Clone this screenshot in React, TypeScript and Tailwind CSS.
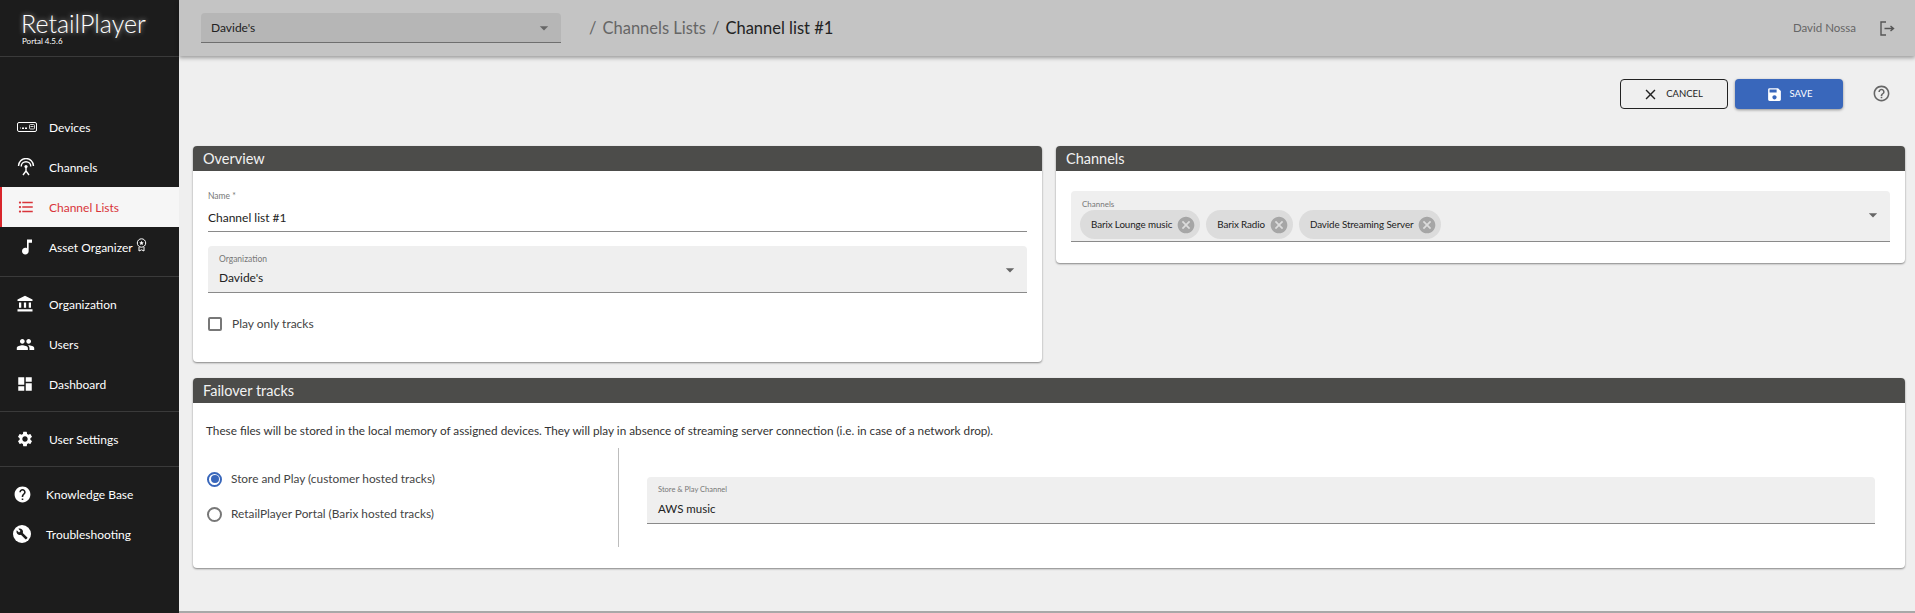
import { ReactNode } from "react";
import {
  MdAccountBalance, MdArrowDropDown, MdBuild, MdCancel, MdClose, MdDashboard, MdFormatListBulleted,
  MdHelp, MdHelpOutline, MdMusicNote, MdPeople, MdSave, MdSettings,
} from "react-icons/md";

const FONT = "font-['Lato','Noto_Sans',sans-serif]";

function DeviceIcon() {
  return (
    <svg width="20" height="10" viewBox="0 0 20 10" fill="none">
      <rect x="0.5" y="0.5" width="19" height="9" rx="1.5" stroke="#fff" />
      <rect x="5" y="5.5" width="2" height="1.5" fill="#fff" />
      <rect x="8" y="5.5" width="2" height="1.5" fill="#fff" />
      <rect x="12.5" y="2.5" width="5" height="4.5" rx="1" stroke="#fff" strokeWidth="0.8" />
      <path d="M3 6h1M13.5 4.5h3" stroke="#fff" strokeWidth="0.8" />
    </svg>
  );
}

function AntennaIcon() {
  return (
    <svg width="18" height="18" viewBox="0 0 18 18" fill="none" stroke="#fff" strokeWidth="1.4">
      <path d="M1.5 8a7.5 7.5 0 0 1 15 0" />
      <path d="M4.2 8.5a4.8 4.8 0 0 1 9.6 0" />
      <circle cx="9" cy="8.5" r="1.6" fill="#fff" stroke="none" />
      <path d="M9 9v4M9 13l-3 4M9 13l3 4" />
    </svg>
  );
}

function AwardIcon() {
  return (
    <svg width="11" height="14" viewBox="0 0 11 14" fill="none" stroke="#fff" strokeWidth="1">
      <circle cx="5.5" cy="5" r="4.2" />
      <path d="M5.5 2.8l.7 1.4 1.5.2-1.1 1 .3 1.5-1.4-.7-1.4.7.3-1.5-1.1-1 1.5-.2z" fill="#fff" stroke="none" />
      <path d="M3 9v4l2.5-1.2L8 13V9" />
    </svg>
  );
}

function LogoutIcon() {
  return (
    <svg width="15" height="15" viewBox="0 0 15 15" fill="none" stroke="#555" strokeWidth="1.4">
      <path d="M6 1H1v13h5" />
      <path d="M4.5 7.5h9M10.5 5l3 2.5-3 2.5" />
    </svg>
  );
}

function NavRow({ icon, label, active, extra, tight }: { icon: ReactNode; label: string; active?: boolean; extra?: ReactNode; tight?: boolean }) {
  return (
    <div className={`flex h-10 items-center text-[12px] ${active ? "border-l-2 border-[#d9262c] bg-[#f6f6f6] text-[#d9343a]" : "text-white"} ${tight ? "pl-[13px]" : active ? "pl-[15px]" : "pl-[17px]"}`}>
      <span className={`flex shrink-0 items-center justify-start ${tight ? "w-[33px]" : "w-[32px]"}`}>{icon}</span>
      <span className="pt-[1px]">{label}</span>
      {extra}
    </div>
  );
}

function Sidebar() {
  return (
    <aside className="flex h-[613px] w-[179px] shrink-0 flex-col bg-[#1c1c1c]">
      <div className="h-[57px] border-b border-[#3a3a3a] pl-[21px] pt-[9px] text-white">
        <div className="text-[25px] leading-[28px] font-light [text-shadow:0_0_5px_rgba(255,255,255,0.7)]">RetailPlayer</div>
        <div className="pl-[1px] text-[8px] leading-[9px]">Portal 4.5.6</div>
      </div>
      <nav className="pt-[50px]">
        <NavRow icon={<DeviceIcon />} label="Devices" />
        <NavRow icon={<AntennaIcon />} label="Channels" />
        <NavRow active icon={<MdFormatListBulleted size={18} color="#d9343a" />} label="Channel Lists" />
        <NavRow icon={<MdMusicNote size={20} color="#fff" />} label="Asset Organizer" extra={<span className="mb-[5px] ml-[3px]"><AwardIcon /></span>} />
      </nav>
      <div className="mt-[9px] border-t border-[#3a3a3a] pt-[7px]">
        <NavRow icon={<MdAccountBalance size={18} color="#fff" className="-ml-px" />} label="Organization" />
        <NavRow icon={<MdPeople size={19} color="#fff" className="-ml-px" />} label="Users" />
        <NavRow icon={<MdDashboard size={18} color="#fff" className="-ml-px" />} label="Dashboard" />
      </div>
      <div className="mt-[7px] border-t border-[#3a3a3a] py-[7px]">
        <NavRow icon={<MdSettings size={18} color="#fff" className="-ml-px" />} label="User Settings" />
      </div>
      <div className="border-t border-[#3a3a3a] pt-[7px]">
        <NavRow tight icon={<MdHelp size={19} color="#fff" />} label="Knowledge Base" />
        <NavRow tight icon={<span className="flex h-[18px] w-[18px] items-center justify-center rounded-full bg-white"><MdBuild size={12} color="#1c1c1c" /></span>} label="Troubleshooting" />
      </div>
    </aside>
  );
}

function TopBar() {
  return (
    <header className="flex h-14 items-center bg-[#c4c4c4] pl-[22px] pr-[20px] shadow-[0_2px_4px_rgba(0,0,0,0.35)]">
      <div className="flex h-[30px] w-[360px] items-center justify-between rounded-t-[4px] border-b border-[#6f6f6f] bg-[#b6b6b6] pl-[10px] pr-[7px] text-[12px] text-[#222]">
        <span>Davide's</span>
        <MdArrowDropDown size={20} color="#666" />
      </div>
      <div className="ml-[28px] flex items-center gap-[6px] text-[16.5px] text-[#666]">
        <span>/</span>
        <span>Channels Lists</span>
        <span>/</span>
        <span className="text-[#222]">Channel list #1</span>
      </div>
      <div className="ml-auto flex items-center gap-[24px]">
        <span className="text-[11.5px] text-[#666]">David Nossa</span>
        <LogoutIcon />
      </div>
    </header>
  );
}

function Card({ title, children, className }: { title: string; children: ReactNode; className?: string }) {
  return (
    <section className={`overflow-hidden rounded-[4px] bg-white shadow-[0_1px_2px_rgba(0,0,0,0.45)] ${className ?? ""}`}>
      <div className="flex h-[25px] items-center bg-[#4c4c4a] pl-[10px] text-[14.5px] text-[#f2f2f2]">{title}</div>
      {children}
    </section>
  );
}

function Chip({ label }: { label: string }) {
  return (
    <span className="flex h-[29px] items-center gap-[4px] rounded-full bg-[#dcdcdc] pl-[11px] pr-[4px] text-[9.8px] tracking-[-0.1px] text-[#222]">
      {label}
      <MdCancel size={20} color="#a6a6a6" />
    </span>
  );
}

export default function App() {
  return (
    <div className={`flex h-[613px] w-[1915px] overflow-hidden bg-[#efefef] ${FONT}`}>
      <Sidebar />
      <main className="flex min-w-0 flex-1 flex-col border-b-2 border-[#a8a8a8]">
        <TopBar />
        <div className="relative mt-[23px] flex h-[30px] items-center justify-end gap-[7px] pr-[72px]">
          <button className="flex h-[30px] w-[108px] items-center justify-center gap-[7px] rounded-[4px] border border-[#222] pr-[3px] text-[9.5px] text-[#222]">
            <MdClose size={17} color="#222" />
            CANCEL
          </button>
          <button className="flex h-[30px] w-[108px] items-center justify-center gap-[7px] rounded-[4px] bg-[#3967bb] text-[9.5px] text-white shadow-[0_1px_3px_rgba(0,0,0,0.4)]">
            <MdSave size={17} color="#fff" />
            SAVE
          </button>
          <span className="absolute right-[24px] top-[5px]"><MdHelpOutline size={19} color="#666" /></span>
        </div>

        <div className="mt-[37px] grid grid-cols-2 items-start gap-x-[14px] pl-[14px] pr-[10px]">
          <Card title="Overview" className="h-[216px]">
            <div className="px-[15px]">
              <div className="mt-[20px] h-[41px] border-b border-[#8a8a8a]">
                <div className="text-[8.5px] leading-[10px] text-[#777]">Name *</div>
                <div className="mt-[8px] text-[12px] leading-[17px] text-[#222]">Channel list #1</div>
              </div>
              <div className="relative mt-[14px] h-[47px] rounded-t-[4px] border-b border-[#8a8a8a] bg-[#efefef] pl-[11px] pt-[8px]">
                <div className="text-[8.5px] leading-[10px] text-[#777]">Organization</div>
                <div className="mt-[5px] text-[12px] leading-[17px] text-[#222]">Davide's</div>
                <span className="absolute right-[7px] top-[14px]"><MdArrowDropDown size={20} color="#666" /></span>
              </div>
              <label className="mt-[22px] flex items-center gap-[10px] text-[12px] text-[#444]">
                <span className="h-[14px] w-[14px] rounded-[2px] border-2 border-[#777]" />
                Play only tracks
              </label>
            </div>
          </Card>
          <Card title="Channels" className="h-[117px]">
            <div className="relative mx-[15px] mt-[20px] h-[51px] rounded-t-[4px] border-b border-[#8a8a8a] bg-[#efefef] pl-[11px] pt-[8px]">
              <div className="text-[8px] leading-[10px] text-[#777]">Channels</div>
              <div className="-ml-[2px] mt-[1px] flex gap-[6px]">
                <Chip label="Barix Lounge music" />
                <Chip label="Barix Radio" />
                <Chip label="Davide Streaming Server" />
              </div>
              <span className="absolute right-[7px] top-[14px]"><MdArrowDropDown size={20} color="#666" /></span>
            </div>
          </Card>
          <Card title="Failover tracks" className="col-span-2 mt-[16px] h-[190px]">
            <p className="ml-[13px] mt-[20px] text-[11.75px] leading-[16px] text-[#333]">
              These files will be stored in the local memory of assigned devices. They will play in absence of streaming server connection (i.e. in case of a network drop).
            </p>
            <div className="mt-[9px] flex">
              <div className="h-[99px] w-[426px] border-r border-[#bdbdbd] pl-[14px] pt-[21px] text-[11.85px] text-[#444]">
                <div className="flex h-[20px] items-center gap-[9px]">
                  <span className="flex h-[15px] w-[15px] items-center justify-center rounded-full border-2 border-[#3967bb]">
                    <span className="h-[8px] w-[8px] rounded-full bg-[#3967bb]" />
                  </span>
                  Store and Play (customer hosted tracks)
                </div>
                <div className="mt-[15px] flex h-[20px] items-center gap-[9px]">
                  <span className="h-[15px] w-[15px] rounded-full border-2 border-[#777]" />
                  RetailPlayer Portal (Barix hosted tracks)
                </div>
              </div>
              <div className="ml-[28px] mt-[29px] h-[47px] w-[1228px] rounded-t-[4px] border-b border-[#8a8a8a] bg-[#efefef] pl-[11px] pt-[8px]">
                <div className="text-[7.5px] leading-[10px] text-[#777]">Store & Play Channel</div>
                <div className="mt-[5px] text-[11.5px] leading-[17px] text-[#222]">AWS music</div>
              </div>
            </div>
          </Card>
        </div>
      </main>
    </div>
  );
}
